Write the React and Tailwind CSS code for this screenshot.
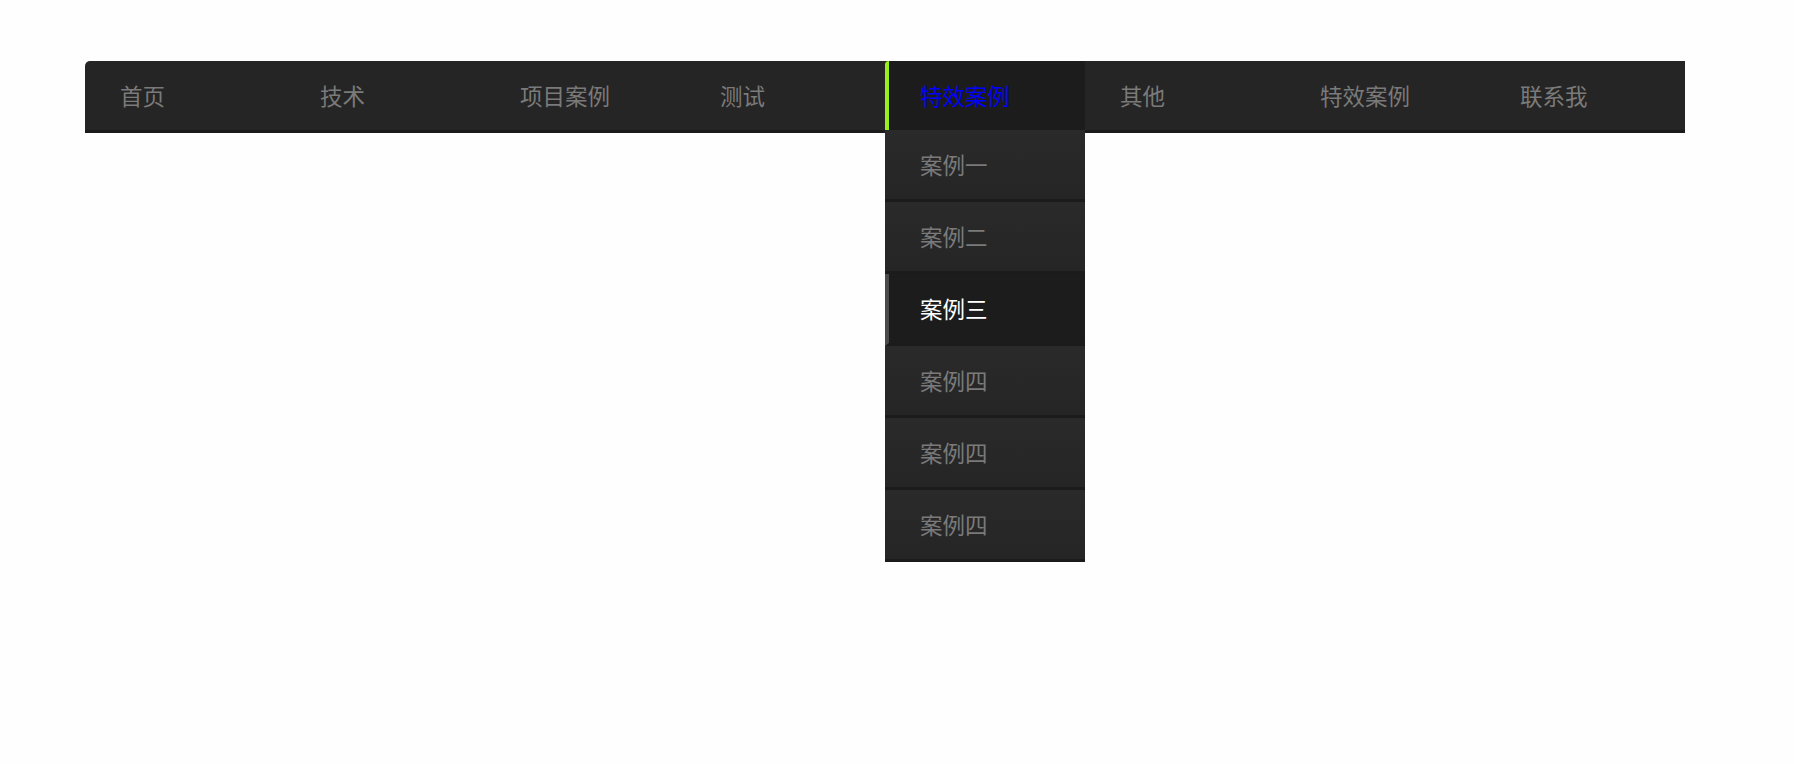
import React from "react";

const navItems = ["首页", "技术", "项目案例", "测试", "特效案例", "其他", "特效案例", "联系我"];
const subItems = ["案例一", "案例二", "案例三", "案例四", "案例四", "案例四"];

const font = { fontFamily: '"Microsoft YaHei", "Noto Sans CJK SC", "Noto Sans", sans-serif' };

const App = () => {
  return (
    <div className="min-h-[764px] w-full bg-[#fefefe] pt-[61px] pl-[85px]" style={font}>
      <ul className="flex w-[1600px] h-[72px] bg-[#252525] border-b-[3px] border-[#1b1b1b] rounded-tl-[5px]">
        {navItems.map((item, i) => {
          const active = i === 4;
          return (
            <li key={i} className="relative w-[200px] h-full">
              {active ? (
                <div className="flex items-center h-[69px] bg-[#1c1c1c] border-l-[4px] border-[#9aee1e] rounded-tl-[4px] pl-[31px] text-[22.5px] text-[#0000ff]">
                  {item}
                </div>
              ) : (
                <div className="flex items-center h-[69px] pl-[35px] text-[22.5px] text-[#7a7a7a]">{item}</div>
              )}
              {active && (
                <ul className="absolute left-0 top-[69px] w-[200px] z-10">
                  {subItems.map((sub, j) => {
                    const on = j === 2;
                    return (
                      <li
                        key={j}
                        className={
                          on
                            ? "flex items-center h-[72px] bg-[#1c1c1c] border-l-[4px] border-[#4a4a4a] border-b-[3px] border-b-[#1b1b1b] pl-[31px] text-[22.5px] text-white"
                            : "flex items-center h-[72px] bg-gradient-to-b from-[#2a2a2a] to-[#252525] border-b-[3px] border-[#1b1b1b] pl-[35px] text-[22.5px] text-[#7a7a7a]"
                        }
                      >
                        {sub}
                      </li>
                    );
                  })}
                </ul>
              )}
            </li>
          );
        })}
      </ul>
    </div>
  );
};

export default App;
